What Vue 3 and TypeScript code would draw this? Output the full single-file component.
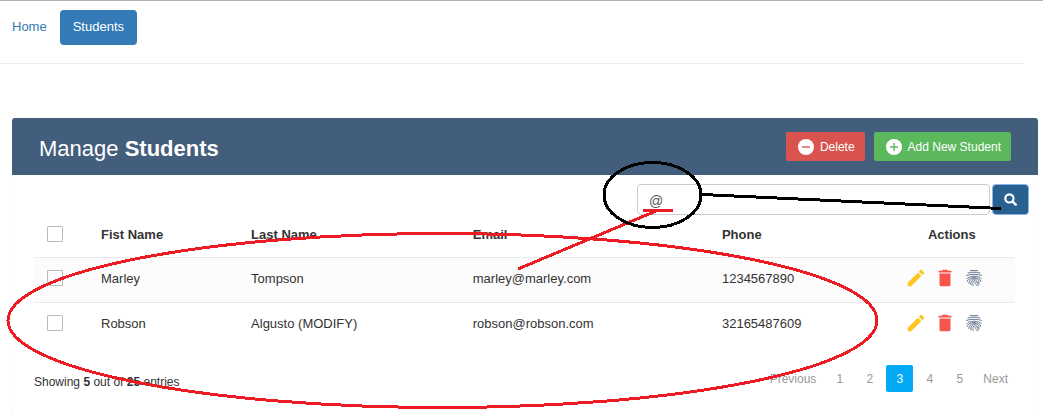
<script setup lang="ts">
import { ref } from 'vue'

interface Student {
  first: string
  last: string
  email: string
  phone: string
}

const students: Student[] = [
  { first: 'Marley', last: 'Tompson', email: 'marley@marley.com', phone: '1234567890' },
  { first: 'Robson', last: 'Algusto (MODIFY)', email: 'robson@robson.com', phone: '32165487609' },
]
const pages = [1, 2, 3, 4, 5]
const currentPage = ref(3)
const query = ref('@')
</script>

<template>
  <div class="page">
    <nav class="nav">
      <a href="#" class="nav-link">Home</a>
      <a href="#" class="nav-link active">Students</a>
    </nav>
    <hr class="rule" />

    <main class="panel">
      <header class="panel-head">
        <h2>Manage <b>Students</b></h2>
        <div class="buttons">
          <button type="button" class="btn danger">
            <svg width="16" height="16" viewBox="0 0 16 16" aria-hidden="true">
              <circle cx="8" cy="8" r="8" fill="#fff" />
              <path d="M4 8h8" stroke="#d9534f" stroke-width="1.4" />
            </svg>
            Delete
          </button>
          <button type="button" class="btn success">
            <svg width="16" height="16" viewBox="0 0 16 16" aria-hidden="true">
              <circle cx="8" cy="8" r="8" fill="#fff" />
              <path d="M4 8h8M8 4v8" stroke="#5cb85c" stroke-width="1.4" />
            </svg>
            Add New Student
          </button>
        </div>
      </header>

      <form class="search" @submit.prevent>
        <input v-model="query" type="text" aria-label="Search students" />
        <button type="submit" aria-label="Search">
          <svg width="13" height="13" viewBox="0 0 12 12" aria-hidden="true">
            <circle cx="5" cy="5" r="3.8" fill="none" stroke="#fff" stroke-width="2" />
            <path d="M8 8l2.8 2.8" stroke="#fff" stroke-width="2.2" stroke-linecap="round" />
          </svg>
        </button>
      </form>

      <div class="content">
        <table>
          <colgroup>
            <col class="c-check" />
            <col class="c-first" />
            <col class="c-last" />
            <col class="c-email" />
            <col class="c-phone" />
            <col />
          </colgroup>
          <thead>
            <tr>
              <th class="check"><input type="checkbox" aria-label="Select all students" /></th>
              <th>Fist Name</th>
              <th>Last Name</th>
              <th>Email</th>
              <th>Phone</th>
              <th class="actions-head">Actions</th>
            </tr>
          </thead>
          <tbody>
            <tr v-for="s in students" :key="s.email">
              <td class="check"><input type="checkbox" :aria-label="`Select ${s.first}`" /></td>
              <td>{{ s.first }}</td>
              <td>{{ s.last }}</td>
              <td>{{ s.email }}</td>
              <td>{{ s.phone }}</td>
              <td class="actions-cell">
                <div class="actions">
                  <a href="#" class="edit" aria-label="Edit">
                    <svg viewBox="0 0 24 24"><path d="M3 17.25V21h3.75L17.81 9.94l-3.75-3.75L3 17.25zM20.71 7.04c.39-.39.39-1.02 0-1.41l-2.34-2.34c-.39-.39-1.02-.39-1.41 0l-1.83 1.83 3.75 3.75 1.83-1.83z" /></svg>
                  </a>
                  <a href="#" class="delete" aria-label="Delete">
                    <svg viewBox="0 0 24 24"><path d="M6 19c0 1.1.9 2 2 2h8c1.1 0 2-.9 2-2V7H6v12zM19 4h-3.5l-1-1h-5l-1 1H5v2h14V4z" /></svg>
                  </a>
                  <a href="#" class="finger" aria-label="Fingerprint">
                    <svg viewBox="0 0 22 22">
                      <g transform="translate(3 3)" fill="none" stroke="currentColor" stroke-width="1" stroke-linecap="round">
                        <path d="M4.200.6h7.600M2 3C5 1.900 11 1.900 14 3M.5 5.400C3.500 3.900 12.500 3.900 15.500 5.400" />
                        <path d="M.7 8.700C2.500 5.300 13.500 5.300 15.300 8.700" />
                        <path d="M1.200 11.400C1.500 6.200 14.500 6.200 14.800 11.400" />
                        <path d="M3 13.600C2 7.300 13.200 7 13 12.300c-.1 1-1.500 1-1.800 0" />
                        <path d="M5 15C3.200 8.800 11.300 8.600 11 12.200c0 1.300 1 2 2.300 1.800" />
                        <path d="M7.300 15.500C5 11.400 9.200 10.300 9.100 12.300c0 1.700 1.200 3 2.900 3.200" />
                      </g>
                    </svg>
                  </a>
                </div>
              </td>
            </tr>
          </tbody>
        </table>

        <footer class="foot">
          <div>Showing <b>5</b> out of <b>25</b> entries</div>
          <ul class="pagination">
            <li><a href="#">Previous</a></li>
            <li v-for="p in pages" :key="p">
              <a href="#" :class="{ current: p === currentPage }" @click.prevent="currentPage = p">{{ p }}</a>
            </li>
            <li><a href="#">Next</a></li>
          </ul>
        </footer>
      </div>
    </main>

    <svg class="marks" width="1043" height="418" viewBox="0 0 1043 418" fill="none" stroke-width="3" aria-hidden="true">
      <ellipse cx="442.5" cy="320.5" rx="434.5" ry="87" stroke="#ed1c24" />
      <path d="M643 210.5h30M656 211L518 269" stroke="#ed1c24" />
      <ellipse cx="652.5" cy="195" rx="48.5" ry="32.5" stroke="#000" />
      <path d="M702 194.5L1001 208.5" stroke="#000" />
    </svg>
  </div>
</template>

<style>
body {
  background: #fff;
}
</style>

<style scoped>
* {
  box-sizing: border-box;
}
.page {
  position: relative;
  border-top: 1px solid #b0b0b0;
  color: #333;
  font: 13px/18px "Liberation Sans", Arial, sans-serif;
}
a {
  text-decoration: none;
}
.nav {
  display: flex;
  padding-top: 9px;
}
.nav-link {
  padding: 8px 13px 9px;
  border-radius: 4px;
  color: #337ab7;
}
.nav-link:first-child {
  padding-left: 12px;
}
.nav-link.active {
  background: #337ab7;
  color: #fff;
}
.rule {
  margin: 18px 19px 54px 0;
  border: 0;
  border-top: 1px solid #eee;
}
.panel {
  margin: 0 5px 0 12px;
  border-radius: 3px;
  box-shadow: 0 1px 1px rgba(0, 0, 0, 0.05), 0 0 1px rgba(0, 0, 0, 0.1);
}
.panel-head {
  display: flex;
  align-items: center;
  justify-content: space-between;
  height: 57px;
  padding: 0 27px;
  border-radius: 3px 3px 0 0;
  background: #435d7d;
  color: #fff;
}
h2 {
  margin: 4px 0 0;
  font-size: 22px;
  line-height: 26px;
  font-weight: 400;
}
.buttons {
  display: flex;
  gap: 9px;
}
.btn {
  display: flex;
  align-items: center;
  gap: 6px;
  height: 29px;
  padding: 0 10px 0 12px;
  border: 0;
  border-radius: 2px;
  color: #fff;
  font: inherit;
  font-size: 12px;
}
.danger {
  background: #d9534f;
}
.success {
  background: #5cb85c;
}
.search {
  display: flex;
  justify-content: flex-end;
  gap: 2px;
  padding: 9px 9px 0 0;
}
.search input {
  width: 353px;
  height: 31px;
  padding: 2px 11px 0;
  border: 1px solid #ccc;
  border-radius: 4px;
  background: #fff;
  color: #555;
  font: inherit;
  font-size: 14px;
}
.search button {
  display: flex;
  align-items: center;
  justify-content: center;
  width: 37px;
  height: 31px;
  padding: 0;
  border: 1px solid #8ab4f0;
  border-radius: 4px;
  background: #286090;
}
.content {
  padding: 0 23px 24px 22px;
}
table {
  width: 100%;
  border-collapse: collapse;
  table-layout: fixed;
}
.c-check {
  width: 62px;
}
.c-first {
  width: 15.3%;
}
.c-last {
  width: 22.6%;
}
.c-email {
  width: 25.4%;
}
.c-phone {
  width: 17.5%;
}
th,
td {
  padding: 0 5px;
  text-align: left;
  vertical-align: middle;
}
th {
  height: 42px;
  padding-bottom: 2px;
}
td {
  height: 45px;
  padding-bottom: 1px;
  border-top: 1px solid #e9e9e9;
}
tbody tr:nth-child(odd) {
  background: #fcfcfc;
}
.check {
  padding-left: 13px;
  padding-bottom: 4px;
}
.actions-cell {
  padding-bottom: 4px;
}
.check input {
  appearance: none;
  display: block;
  width: 16px;
  height: 16px;
  margin: 0;
  border: 1px solid #bbb;
  border-radius: 1px;
  background: #fff;
}
.actions-head {
  text-align: center;
}
.actions {
  display: flex;
  gap: 7px;
  padding-left: 11px;
}
.actions svg {
  display: block;
  width: 22px;
  height: 22px;
  fill: currentColor;
}
.edit {
  color: #ffc421;
}
.delete {
  color: #f5554a;
}
.finger {
  color: #6b7a96;
}
.foot {
  display: flex;
  align-items: center;
  justify-content: space-between;
  margin-top: 18px;
  font-size: 12px;
}
.foot > div {
  padding-top: 6px;
}
.pagination {
  display: flex;
  gap: 3px;
  margin: 0;
  padding: 0;
  list-style: none;
}
.pagination a {
  display: block;
  min-width: 27px;
  padding: 1px 7px 0;
  border-radius: 2px;
  color: #999;
  line-height: 26px;
  text-align: center;
}
.pagination .current {
  background: #03a9f4;
  color: #fff;
}
.marks {
  position: absolute;
  top: -1px;
  left: 0;
  pointer-events: none;
  shape-rendering: crispEdges;
}
</style>
